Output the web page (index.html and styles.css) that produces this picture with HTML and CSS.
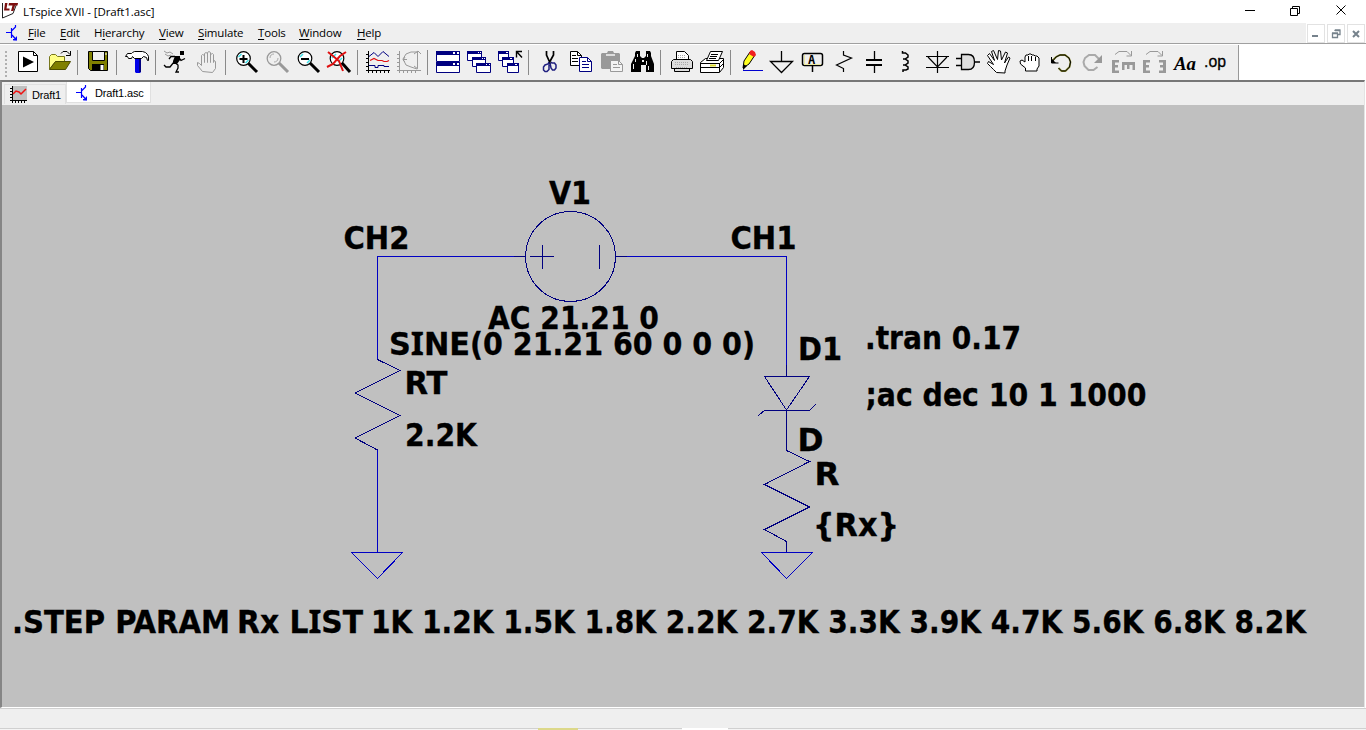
FILE: index.html
```html
<!DOCTYPE html>
<html lang="en">
<head>
<meta charset="utf-8">
<title>LTspice XVII - [Draft1.asc]</title>
<link rel="stylesheet" href="styles.css">
</head>
<body>
<div class="window">
  <header class="titlebar">
    <svg class="app-icon" width="16" height="17" viewBox="0 0 16 17"><path d="M.5 1v15L11 11.500 15 1" fill="#fff" stroke="#222"/><path d="M3 1h2.500L4.500 6.500H7.500V8.500H2zM7 1h9l-.5 2.500h-2.500L11.500 9H9L10.500 3.500H6.500z" fill="#7c1010"/></svg>
    <span class="title-text">LTspice XVII - [Draft1.asc]</span>
    <svg class="win-controls" width="120" height="22" viewBox="0 0 120 22"><path d="M5 10.500h10M50.500 8.500h7v7h-7zM52.500 8V6.500h7v7H58M96.500 5.500l9 9M105.500 5.500l-9 9" fill="none" stroke="#000"/></svg>
  </header>
  <nav class="menubar">
    <svg class="doc-icon" width="12" height="16" viewBox="0 0 12 16"><path d="M0 7.500h5M5.500 3v10M6 5.500L9.500 2V0M6 10l4.500 5M7 14.500h4" fill="none" stroke="#00f" stroke-width="1.200"/><path d="M11 11v4.500H7z" fill="#00f"/></svg>
    <span class="menu m-file"><u>F</u>ile</span><span class="menu m-edit"><u>E</u>dit</span><span class="menu m-hier">H<u>i</u>erarchy</span><span class="menu m-view"><u>V</u>iew</span><span class="menu m-sim"><u>S</u>imulate</span><span class="menu m-tools"><u>T</u>ools</span><span class="menu m-win"><u>W</u>indow</span><span class="menu m-help"><u>H</u>elp</span>
    <div class="mdi">
      <span class="mdi-btn"><svg width="16" height="17"><path d="M4 11h6" stroke="#76828c" stroke-width="2"/></svg></span>
      <span class="mdi-btn"><svg width="16" height="17"><path d="M4.500 8.500h5v4h-5zM4 8h6M7 6V5.500h5v4h-2M7 5h5.500" fill="none" stroke="#76828c" stroke-width="1.300"/></svg></span>
      <span class="mdi-btn"><svg width="16" height="17"><path d="M5 6l6 6M11 6l-6 6" stroke="#76828c" stroke-width="2"/></svg></span>
    </div>
  </nav>
  <div class="toolrow">
    <div class="toolbar">
      <span class="grip"></span>
      <span class="tool"><svg viewBox="0 0 25 24"><path d="M3.500 1.500h15l4 4v16h-19z" fill="#fff" stroke="#000"/><path d="M18.500 1.500v4h4" fill="none" stroke="#000"/><path d="M8 6.500v11l11-5.500z"/></svg></span>
      <span class="tool"><svg viewBox="0 0 25 24"><path d="M3.500 19V6.500l2-2h4l2 2h7v5h-9z" fill="#ffff86" stroke="#77771c"/><path d="M3.500 19.500l6-8h15l-5 8z" fill="#808000" stroke="#4d4d00"/><path d="M15 3.500l2-2h4l3 3M20 5.500h4.500V1" fill="none" stroke="#000"/></svg></span>
      <i class="sep"></i>
      <span class="tool"><svg viewBox="0 0 25 24"><path d="M3.500 1.500h19v19h-17l-2-2z" fill="#808000" stroke="#000"/><path d="M7.500 1.500h12v9h-12z" fill="#efefef" stroke="#000"/><path d="M7 14h12v7H7z"/><path d="M15.500 15h3v5h-3z" fill="#fff"/><path d="M20.500 3h1v2h-1z" fill="#fff"/></svg></span>
      <i class="sep"></i>
      <span class="tool"><svg viewBox="0 0 25 24"><path d="M11 9h6v13l-1 1h-4l-1-1z" fill="#0000e8"/><path d="M15 9h2v13h-2z" fill="#000080"/><path d="M1.500 6.500l2-3h4l1-1 2-1h8l3 1 2 2 1 2v4h-1l-1-3-3-1-2 2h-7l-2-2-1 2h-3l-1-2z" fill="#fff" stroke="#000"/></svg></span>
      <i class="sep"></i>
      <span class="tool"><svg viewBox="0 0 25 24"><path d="M17 1h4v4h-4zM12 6h5v4l-3 4h-4v-3z"/><path d="M12 6.500H8L6 9M15 6.500l3 4 4-2M11 12l-4 5H3l-2-2M11 12l4 3v3l-2 4h3" fill="none" stroke="#000" stroke-width="1.300"/><path d="M1 1l3 2 3-1 3 2M2 4l3 2 3-1" fill="none" stroke="#999"/></svg></span>
      <span class="tool"><svg viewBox="0 0 25 24"><path d="M8.500 21.500l-5-6v-3l2 1 2 2v-10l1-1 2 1v7-9l1.500-1 1.500 1v9-10l1.500-1 1.500 1v10-8l2-1 1 1v8l1-2 1 1v7l-3 4z" fill="#efefef" stroke="#999"/></svg></span>
      <i class="sep"></i>
      <span class="tool"><svg viewBox="0 0 25 24"><path d="M15 13l9 9" stroke="#000" stroke-width="3"/><circle cx="10.500" cy="8.500" r="6.800" fill="#fff" stroke="#000" stroke-width="1.200"/><path d="M5.500 7l3-3M12.500 13l3-3" stroke="#40e0e8" stroke-width="1.500"/><path d="M6.500 9h8M10.500 5v8" stroke="#000" stroke-width="2"/></svg></span>
      <span class="tool"><svg viewBox="0 0 25 24"><path d="M15 13l9 9" stroke="#999" stroke-width="3"/><circle cx="10" cy="8.500" r="6.800" fill="#efefef" stroke="#999" stroke-width="1.300"/><path d="M6 8c0-3 2-4 4-4M14 8c0 3-2 4-4 4" fill="none" stroke="#aaa"/></svg></span>
      <span class="tool"><svg viewBox="0 0 25 24"><path d="M15 13l9 9" stroke="#000" stroke-width="3"/><circle cx="10" cy="8.500" r="6.800" fill="#fff" stroke="#000" stroke-width="1.200"/><path d="M5 7l3-3M12 13l3-3" stroke="#40e0e8" stroke-width="1.500"/><path d="M6 9h8" stroke="#000" stroke-width="2"/></svg></span>
      <span class="tool"><svg viewBox="0 0 25 24"><path d="M16 13l8 9" stroke="#000" stroke-width="3"/><circle cx="11" cy="8.500" r="6.800" fill="#fff" stroke="#000" stroke-width="1.200"/><path d="M6 8l4-4M12 12l4-4" stroke="#40e0e8" stroke-width="1.500"/><path d="M2 2l5 4 6 5 4 10M20 2l-6 4-7 8-6 3" fill="none" stroke="#e01010" stroke-width="2"/></svg></span>
      <i class="sep"></i>
      <span class="tool"><svg viewBox="0 0 25 24"><path d="M3.500 1v22M1 20.500h24M1 4.500h3M1 8.500h3M1 12.500h3M1 16.500h3M7.500 20v3M11.500 20v3M15.500 20v3M19.500 20v3M23.500 20v3" fill="none" stroke="#000"/><path d="M4 6.500l5-4 4 4 5-5 6 5M4 15.500h6v2h3v-2h6v1h5" fill="none" stroke="#000080"/><path d="M5 10.500l4-2 4 2h4l2 1h3l2-1" fill="none" stroke="#e01010" stroke-width="1.200"/></svg></span>
      <span class="tool"><svg viewBox="0 0 25 24"><path d="M3.500 1v22M1 20.500h24M1 4.500h3M1 8.500h3M1 12.500h3M1 16.500h3M7.500 20v3M11.500 20v3M15.500 20v3M19.500 20v3M21.500 1v17M21 2h-6l-5 2-3 5 3 6 5 2 6 2M7 9.500h4M9 7l-2 3 2 2M18 4l4-3 3 3M18 16l4 3" fill="none" stroke="#999"/></svg></span>
      <i class="sep"></i>
      <span class="tool"><svg viewBox="0 0 25 24"><path d="M1.500 1.500h23v10h-23zM1.500 12.500h23v10h-23z" fill="#fff" stroke="#000080"/><path d="M1 1h24v4H1zM1 12h24v4H1z" fill="#000080"/><path d="M18 2h2v2h-2zM22 2h2v2h-2zM18 13h2v2h-2zM22 13h2v2h-2z" fill="#fff"/></svg></span>
      <span class="tool"><svg viewBox="0 0 25 24"><g fill="#fff" stroke="#000080"><path d="M1.500 1.500h14v9h-14z"/><path d="M6.500 7.500h13v9h-13z"/><path d="M10.500 13.500h14v9h-14z"/></g><path d="M1 1h15v3H1zM6 7h14v3H6zM10 13h15v3H10z" fill="#000080"/><path d="M12 2h1v1h-1zM14 2h1v1h-1zM16 8h1v1h-1zM18 8h1v1h-1zM20 14h1v1h-1zM23 14h1v1h-1z" fill="#fff"/></svg></span>
      <span class="tool"><svg viewBox="0 0 25 24"><g fill="#fff" stroke="#000080"><path d="M1.500 1.500h10v9h-10z"/><path d="M5.500 7.500h11v9h-11z"/><path d="M10.500 13.500h11v9h-11z"/></g><path d="M1 1h11v3H1zM5 7h12v3H5zM10 13h12v3H10z" fill="#000080"/><path d="M9 2h2v1H9zM13 8h2v1h-2zM18 14h2v1h-2z" fill="#fff"/><path d="M19.500 7.500V1.500h5.500M20 2l5 5.500" fill="none" stroke="#000" stroke-width="1.400"/></svg></span>
      <i class="sep"></i>
      <span class="tool"><svg viewBox="0 0 25 24"><path d="M10.500 1v4l4 9M17.500 1v4l-5 9" fill="none" stroke="#000" stroke-width="1.700"/><path d="M13 12l-1 2-3 1-1.500 2v3l1.500 1.500h2l2-2v-5M15 12l1 1h2.500l1.500 2v3l-1.500 2h-2l-1.500-2-1-5" fill="none" stroke="#202080" stroke-width="1.500"/></svg></span>
      <span class="tool"><svg viewBox="0 0 25 24"><path d="M3.500 1.500h7l4 4v10h-11z" fill="#fff" stroke="#000"/><path d="M5 5.500h4M5 8.500h6M5 11.500h6M10.500 1.500v4h4" fill="none" stroke="#000"/><path d="M12.500 7.500h8l4 4v10h-12z" fill="#fff" stroke="#000080"/><path d="M15 11.500h4M15 14.500h7M15 17.500h7M20.500 7.500v4h4" fill="none" stroke="#000080"/></svg></span>
      <span class="tool"><svg viewBox="0 0 25 24"><path d="M3 4l1-1h5l1-2h5l1 2h5l1 1v15H4l-1-1z" fill="#999"/><path d="M8 4h9v2H8z" fill="#ddd"/><path d="M12.500 10.500h8l4 4v7h-12z" fill="#f4f4f4" stroke="#999"/><path d="M15 14.500h4M15 17.500h7M20.500 10.500v4h4" fill="none" stroke="#999"/></svg></span>
      <span class="tool"><svg viewBox="0 0 25 24"><path d="M6 3l1-2h4v5l2 2h2l2-2V1h4l1 2v3l3 8v8h-8v-7h-5v7H2v-8l4-8z"/><path d="M8 4h1v3H8zM18 4h1v3h-1zM6 9h1v3H6zM4 14h1v5H4zM17 11h1v4h-1zM19 16h1v4h-1zM13 10h2v2h-2z" fill="#eee"/></svg></span>
      <i class="sep"></i>
      <span class="tool"><svg viewBox="0 0 25 24"><path d="M8.500 10V1.500h8l4 4V10" fill="#fff" stroke="#000"/><path d="M5.500 9.500h17l2 2v7h-3v3h-15v-3h-3v-7z" fill="#ddd" stroke="#000"/><path d="M10 5.500h8M10 7.500h8M7 12.500h14M7 14.500h14M8 17.500h12" stroke="#aaa" stroke-dasharray="1 1"/><path d="M6 18.500h16" stroke="#000"/></svg></span>
      <span class="tool"><svg viewBox="0 0 25 24"><path d="M1.500 12.500l5-4h18v9l-4 5h-19z" fill="#fff" stroke="#000"/><path d="M1.500 13.500h19l4-4M1.500 17.500h19l4-4M20.500 13v9" fill="none" stroke="#000"/><path d="M7.500 10.500l4-9h12l-4 9z" fill="#fff" stroke="#000"/><path d="M12 4.500h7M11 6.500h7M10 8.500h7" stroke="#000"/><path d="M11 15.500h6" stroke="#dddd30" stroke-width="2"/></svg></span>
      <i class="sep"></i>
      <span class="tool"><svg viewBox="0 0 25 24"><path d="M5 18l1-7 6-9 5 3-6 9z" fill="#ffff20" stroke="#000"/><path d="M12 1l2-1 3 2 1 3-2 2-5-3z" fill="#f02020"/><path d="M5 14l4 2-4 4z"/><path d="M5 20.500h20" stroke="#0000d0"/></svg></span>
      <span class="tool"><svg viewBox="0 0 25 24"><path d="M12.500 1v10M1.500 11.500h22l-11 11z" fill="none" stroke="#000" stroke-width="1.300"/></svg></span>
      <span class="tool"><svg viewBox="0 0 25 24"><rect x="2.500" y="3.500" width="20" height="12" rx="2" fill="#eee" stroke="#000" stroke-width="1.500"/><path d="M4.500 5v10M4 14.500h17" stroke="#e8e8a0"/><path d="M12.500 16v6" stroke="#000" stroke-width="1.500"/><text class="label-glyph" x="8" y="14">A</text></svg></span>
      <span class="tool"><svg viewBox="0 0 25 24"><path d="M12.500 1v4l8 3-15 7 7 3.500V22" fill="none" stroke="#000" stroke-width="1.200"/></svg></span>
      <span class="tool"><svg viewBox="0 0 25 24"><path d="M12.500 1v9M12.500 15v8" stroke="#000" stroke-width="1.300"/><path d="M4 10h16M4 15h16" stroke="#000" stroke-width="2"/></svg></span>
      <span class="tool"><svg viewBox="0 0 25 24"><path d="M9.500 1v2h3l2.500 2v2l-3 2h-2 2l3 2v2l-3 2h-2 2l3 2v2l-2 1h-3v2" fill="none" stroke="#000" stroke-width="1.500"/></svg></span>
      <span class="tool"><svg viewBox="0 0 25 24"><path d="M13.500 1v22M2 6.500h23M2 17.500h23M4 7l9.500 10L23 7" fill="none" stroke="#000" stroke-width="1.200"/></svg></span>
      <span class="tool"><svg viewBox="0 0 25 24"><path d="M6.500 4.500h7c4 0 6 3 6 7.500s-2 7.500-6 7.500h-7z" fill="#ddd" stroke="#000" stroke-width="1.300"/><path d="M1 8.500h5M1 15.500h5M20 12h5" stroke="#000" stroke-width="1.300"/></svg></span>
      <span class="tool"><svg viewBox="0 0 25 24"><path d="M10.500 22.500l-3-3-3-3-3-3 1-2 5 3-6-9 2-2 5 7-3-9 2-1 4 9 1-9 2 .5 1 9 4-8 2 1-3 10 4-6 1.500 1-3 7-2 6v2z" fill="#fff" stroke="#000"/></svg></span>
      <span class="tool"><svg viewBox="0 0 25 24"><path d="M8.500 21v-3l-5-4-.5-3 2-1 3 2V7l1-2 2 0 1-1h2l1 1h2l1 1h2l2 2v8l-2 3v2z" fill="#fff" stroke="#000"/><path d="M11.500 6v5M14.500 6v5M18.500 7v4" stroke="#000"/></svg></span>
      <span class="tool"><svg viewBox="0 0 25 24"><path d="M4 11l4-4 4-2h5l4 3 1.500 4-1 5-4 4h-4l-3-3" fill="none" stroke="#8a8a30" stroke-width="1.800"/><path d="M4 12l4-5 4-2h5l4 3 1.500 4-1 5-4 4h-4l-3-3M3.500 7v6h7" fill="none" stroke="#000"/><path d="M3 8v5h5z"/></svg></span>
      <span class="tool"><svg viewBox="0 0 25 24"><path d="M20 9l-4-4h-6L6 8l-1.500 4 1 4 4 4h5l4-3" fill="none" stroke="#aaa" stroke-width="2"/><path d="M23 5v8h-8z" fill="#999"/></svg></span>
      <span class="tool"><svg viewBox="0 0 25 24"><path d="M5 4.500l4-3h8l4 4M21.500 1v5h-5" fill="none" stroke="#999"/><path d="M2 10h7v2.500H5v2.500h3v2.500H5v3h4V23H2zM12 12h13v3h-13zM12 14h2.500v6H12zM17 14h2.500v5H17zM22.500 14H25v6h-2.500z" fill="#999"/></svg></span>
      <span class="tool"><svg viewBox="0 0 25 24"><path d="M5 4.500l4-3h8l4 4M21.500 1v5h-5" fill="none" stroke="#999"/><path d="M2 10h7v2.500H5v2.500h3v2.500H5v3h4V23H2zM25 10h-7v2.500h4v2.500h-3v2.500h3v3h-4V23h7z" fill="#999"/></svg></span>
      <span class="tool"><svg viewBox="0 0 25 24"><text class="aa-glyph" x="2" y="20" textLength="22" lengthAdjust="spacingAndGlyphs">Aa</text></svg></span>
      <span class="tool"><svg viewBox="0 0 25 24"><text class="op-glyph" x="1" y="17" textLength="22" lengthAdjust="spacingAndGlyphs">.op</text></svg></span>
    </div>
  </div>
  <main class="workspace">
    <div class="tabs">
      <span class="tab tab-plot"><svg width="17" height="17" viewBox="0 0 17 17"><path d="M3 0h14v14H3z" fill="#c0c0c0"/><path d="M2.500 0v17M0 14.500h17M0 2.500h3M0 5.500h3M0 8.500h3M0 11.500h3M5.500 14v3M8.500 14v3M11.500 14v3M14.500 14v3" stroke="#000" fill="none"/><path d="M3 8l3-3 3 1 2 2 5-5" fill="none" stroke="#f01010" stroke-width="1.500"/></svg>Draft1</span>
      <span class="tab active"><svg width="12" height="16" viewBox="0 0 12 16"><path d="M0 7.500h5M5.500 3v10M6 5.500L9.500 2V0M6 10l4.500 5M7 14.500h4" fill="none" stroke="#00f" stroke-width="1.200"/><path d="M11 11v4.500H7z" fill="#00f"/></svg>Draft1.asc</span>
    </div>
    <svg class="schematic" width="1362" height="602" viewBox="2 105 1362 602">
      <g class="wire">
        <path d="M514 256.500H377.500V359M627 256.500H786.500V365M377.500 450V551.500"/>
        <path d="M351.500 552.500H402.500L377.500 578.500zM761.500 552.500H812.500L786.500 578.500z"/>
      </g>
      <g class="part">
        <circle cx="570.500" cy="256.500" r="45"/>
        <path d="M514 256.500H525.500M615.500 256.500H627M530 256.500H554M542.500 245V269M599.500 245V269"/>
        <path d="M377.500 359.500L400 370.500 355 393 400 415.500 355 438 377.500 450"/>
        <path d="M786.500 365V376.500M764.500 376.500H809.500L786.500 410zM758.500 415.500L764.500 410.500H809.500L815.500 404.500M786.500 410V450.500L809.500 461.500 764.500 484.500 809.500 507 764.500 529.500 786.500 541.500V552"/>
      </g>
      <g class="labels">
        <text x="549" y="204" textLength="42" lengthAdjust="spacingAndGlyphs">V1</text>
        <text x="343.500" y="249" textLength="66" lengthAdjust="spacingAndGlyphs">CH2</text>
        <text x="730.500" y="249" textLength="66" lengthAdjust="spacingAndGlyphs">CH1</text>
        <text x="488" y="329" textLength="171" lengthAdjust="spacingAndGlyphs">AC 21.21 0</text>
        <text y="355"><tspan x="389" textLength="81" lengthAdjust="spacingAndGlyphs">S<tspan class="slab">I</tspan>NE</tspan><tspan x="470" textLength="285" lengthAdjust="spacingAndGlyphs">(0 21.21 60 0 0 0)</tspan></text>
        <text x="404.500" y="394" textLength="43" lengthAdjust="spacingAndGlyphs">RT</text>
        <text x="405" y="446" textLength="72" lengthAdjust="spacingAndGlyphs">2.2K</text>
        <text x="798" y="360" textLength="44" lengthAdjust="spacingAndGlyphs">D1</text>
        <text x="865" y="349" textLength="156" lengthAdjust="spacingAndGlyphs">.tran 0.17</text>
        <text x="865.500" y="406" textLength="281" lengthAdjust="spacingAndGlyphs">;ac dec 10 1 1000</text>
        <text x="797.500" y="451" textLength="26" lengthAdjust="spacingAndGlyphs">D</text>
        <text x="814.500" y="485" textLength="25" lengthAdjust="spacingAndGlyphs">R</text>
        <text x="813" y="536" textLength="86" lengthAdjust="spacingAndGlyphs">{Rx}</text>
        <text y="633"><tspan x="12" textLength="218" lengthAdjust="spacingAndGlyphs">.STEP PARAM</tspan><tspan x="237" textLength="126" lengthAdjust="spacingAndGlyphs">Rx L<tspan class="slab">I</tspan>ST</tspan><tspan x="371" textLength="935" lengthAdjust="spacingAndGlyphs">1K 1.2K 1.5K 1.8K 2.2K 2.7K 3.3K 3.9K 4.7K 5.6K 6.8K 8.2K</tspan></text>
      </g>
    </svg>
  </main>
  <footer class="statusbar"></footer>
  <div class="edge"><i class="edge-accent"></i><i class="edge-light"></i></div>
</div>
</body>
</html>
```

FILE: styles.css
```css
* { box-sizing: border-box; }
body { margin: 0; overflow: hidden; background: #fff; color: #000; }
.window { width: 1366px; height: 730px; display: flex; flex-direction: column; font: 12px "Open Sans", "Noto Sans", sans-serif; }
.titlebar { height: 23px; flex: none; display: flex; align-items: flex-start; padding-left: 2px; }
.app-icon { margin-top: 2px; flex: none; }
.title-text { margin-left: 5px; line-height: 23px; font-size: 11.500px; letter-spacing: -0.1px; white-space: nowrap; }
.win-controls { margin: 0 6px 0 auto; }
.menubar { height: 21px; flex: none; display: flex; align-items: center; background: #efefef; border-bottom: 1px solid #a0a0a0; padding-left: 6px; }
.doc-icon { flex: none; margin-right: 10px; }
.menu { line-height: 20px; white-space: nowrap; letter-spacing: -0.18px; font-size: 11.500px; }
.menu u { text-underline-offset: 2px; }
.m-file { width: 32px; }
.m-edit { width: 34px; }
.m-hier { width: 65px; }
.m-view { width: 39px; }
.m-sim { width: 60px; }
.m-tools { width: 41px; }
.m-win { width: 58px; }
.mdi { margin-left: auto; display: flex; gap: 2px; background: #fff; padding: 0 1px; height: 20px; align-items: center; }
.mdi-btn { width: 18px; height: 19px; border: 1px solid #e2e2e2; }
.mdi-btn svg { display: block; }
.toolrow { height: 36px; flex: none; background: #fff; padding-top: 1px; }
.toolbar { width: 1239px; height: 35px; display: flex; align-items: flex-start; padding-top: 5px; background: #efefef; border-right: 1px solid #999; }
.grip { flex: none; width: 12px; height: 27px; background: radial-gradient(circle at 6px 2px, #b0b0b0 1px, transparent 1.500px) 0 0 / 12px 4px; }
.tool { flex: none; width: 31px; height: 24px; padding-left: 3px; }
.tool svg { width: 25px; height: 24px; display: block; overflow: visible; }
.sep { flex: none; width: 8px; height: 25px; background: linear-gradient(#8a8a8a, #8a8a8a) 3px 0 / 1px 100% no-repeat; }
.label-glyph { font: bold 12px "DejaVu Sans Mono", monospace; }
.aa-glyph { font: italic bold 19px "Liberation Serif", serif; }
.op-glyph { font: 17px "Liberation Sans", sans-serif; stroke: #000; stroke-width: .3px; }
.workspace { height: 628px; flex: none; width: 1365px; border: solid #858585; border-width: 2px 1px 1px 2px; border-right-color: #e3e3e3; border-bottom-color: #fff; border-top-color: #777; background: #c0c0c0; }
.tabs { height: 23px; background: #efefef; display: flex; align-items: flex-start; font: 11px "Liberation Sans", sans-serif; letter-spacing: -0.15px; }
.tab { display: flex; align-items: center; height: 20px; margin-top: 2px; white-space: nowrap; }
.tab-plot { width: 62px; margin-left: 2px; padding-left: 5px; border: 1px solid #e0e0e0; border-bottom: 0; gap: 5px; }
.active { width: 85px; height: 21px; margin-top: 0; background: #fff; padding: 1px 0 0 9px; gap: 7px; border: 1px solid #e0e0e0; border-top: 0; }
.schematic { display: block; }
.wire, .part { fill: none; stroke-width: 1; shape-rendering: crispEdges; }
.wire { stroke: #0000c4; }
.part { stroke: #000080; }
.labels { font: bold 31.500px "DejaVu Sans Condensed", "DejaVu Sans", sans-serif; font-stretch: condensed; stroke: #000; stroke-width: .3px; }
.slab { font-family: "Noto Sans", "Open Sans", sans-serif; }
.statusbar { height: 20px; flex: none; background: #efefef; border-top: 1px solid #d0d0d0; }
.edge { height: 2px; background: linear-gradient(#d0d0d0 50%, #f4f4f4 50%); display: flex; }
.edge-accent { width: 40px; margin-left: 538px; background: #dcd88a; }
.edge-light { width: 46px; margin-left: 104px; background: #fff; }
```
